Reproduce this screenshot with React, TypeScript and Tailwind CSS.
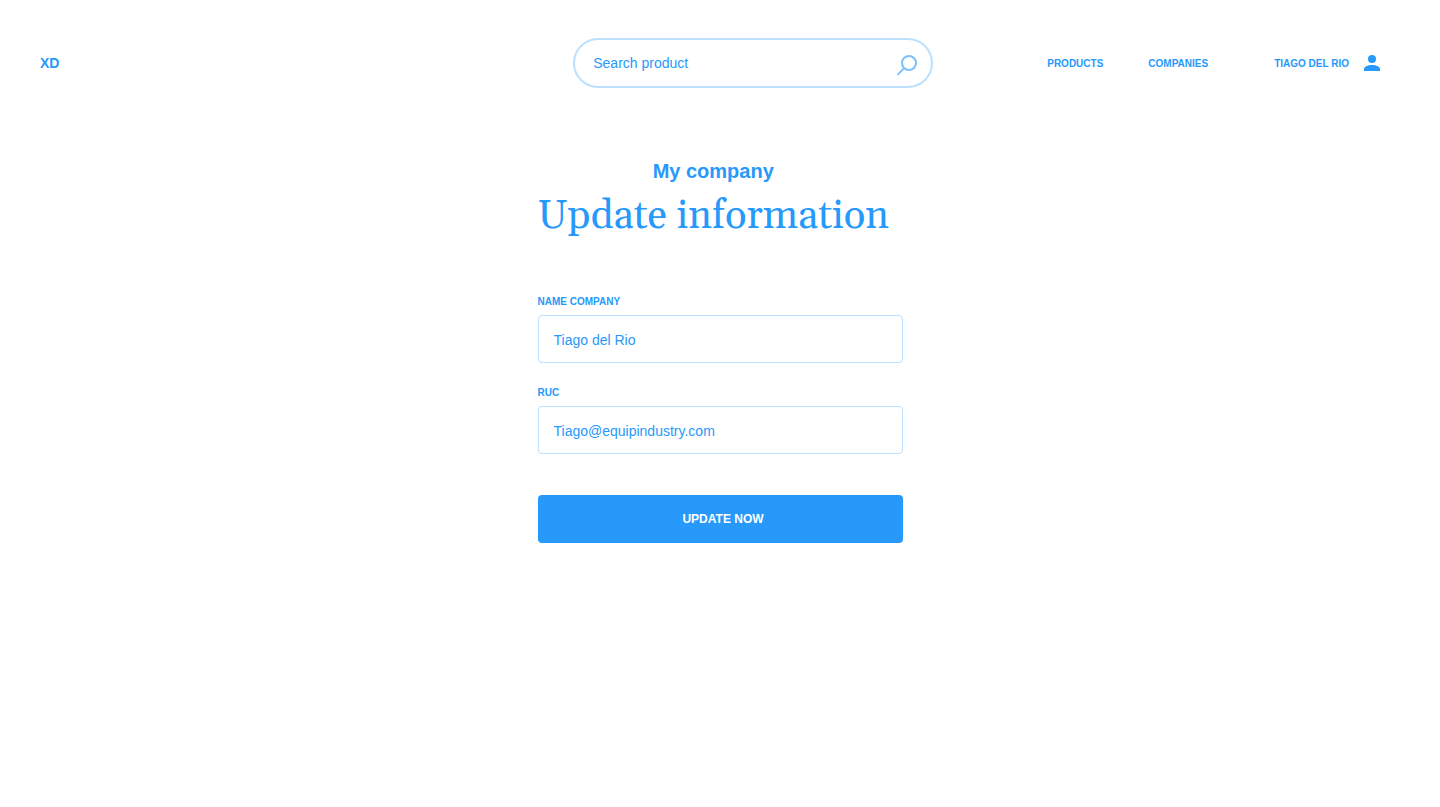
import { useId } from "react";

function SearchIcon() {
  return (
    <svg width="22" height="22" viewBox="0 0 22 22" fill="none" stroke="#7cc1fb" strokeWidth="2" aria-hidden="true">
      <circle cx="13" cy="9" r="7" />
      <path d="M8.2 14.1 1.5 20.9" />
    </svg>
  );
}

function UserIcon() {
  return (
    <svg width="16" height="16" viewBox="0 0 16 16" fill="#2699fb" aria-hidden="true">
      <circle cx="8" cy="4" r="4" />
      <path d="M0 16v-2c0-2.2 3.6-4 8-4s8 1.8 8 4v2z" />
    </svg>
  );
}

function Header() {
  return (
    <header className="flex items-center pt-[38px] pr-[60px] pl-10">
      <a href="#home" className="text-sm font-bold">
        XD
      </a>
      <form
        role="search"
        onSubmit={(event) => event.preventDefault()}
        className="mr-[114px] ml-auto flex h-[50px] w-[360px] items-center rounded-full border-2 border-[#bce0fd] pr-[13px] pl-[18px]"
      >
        <input
          type="text"
          aria-label="Search product"
          placeholder="Search product"
          className="min-w-0 flex-1 text-sm outline-none placeholder:text-[#2699fb] placeholder:opacity-100"
        />
        <button type="submit" aria-label="Search" className="mt-1">
          <SearchIcon />
        </button>
      </form>
      <nav className="flex items-center text-[10px] font-bold">
        <a href="#products" className="mr-[45px]">
          PRODUCTS
        </a>
        <a href="#companies" className="mr-[66px]">
          COMPANIES
        </a>
        <a href="#account" className="flex items-center gap-[15px]">
          TIAGO DEL RIO
          <UserIcon />
        </a>
      </nav>
    </header>
  );
}

function Field({ label, value, type = "text" }: { label: string; value: string; type?: string }) {
  const id = useId();
  return (
    <div className="flex flex-col gap-[7px]">
      <label htmlFor={id} className="text-[10px] leading-3 font-bold">
        {label}
      </label>
      <input
        id={id}
        type={type}
        defaultValue={value}
        className="h-12 w-full rounded border border-[#bce0fd] px-[15px] pt-0.5 text-sm outline-none"
      />
    </div>
  );
}

export default function App() {
  return (
    <div className="min-h-screen bg-white font-['Liberation_Sans',Arial,sans-serif] text-[#2699fb]">
      <Header />
      <main className="mx-auto mt-[70px] flex w-[365px] max-w-full flex-col">
        <div className="self-start text-center">
          <p className="text-xl leading-[26px] font-bold">My company</p>
          <h1 className="mt-2 font-[Georgia,Gelasio,'Liberation_Serif',serif] text-[40px] leading-[50px] whitespace-nowrap">
            Update information
          </h1>
        </div>
        <form onSubmit={(event) => event.preventDefault()} className="mt-[54px] flex flex-col gap-6">
          <Field label="NAME COMPANY" value="Tiago del Rio" />
          <Field label="RUC" value="Tiago@equipindustry.com" />
          <button type="submit" className="mt-[17px] h-12 rounded bg-[#2699fb] pl-1.5 text-xs font-bold text-white">
            UPDATE NOW
          </button>
        </form>
      </main>
    </div>
  );
}
